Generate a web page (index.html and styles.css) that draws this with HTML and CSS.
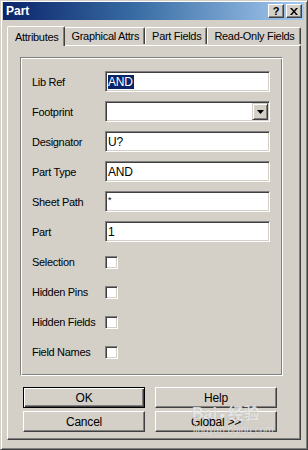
FILE: index.html
```html
<!DOCTYPE html>
<html>
<head>
<meta charset="utf-8">
<link rel="stylesheet" href="styles.css">
</head>
<body>
<div class="window">
  <div class="titlebar">
    <span class="title">Part</span>
    <div class="tbtns">
      <span class="tbtn help">?</span>
      <span class="tbtn close"><svg width="8" height="7" viewBox="0 0 8 7"><path d="M0 0h2l2 2.5L6 0h2L5 3.5 8 7H6L4 4.5 2 7H0l3-3.5z" fill="#000"/></svg></span>
    </div>
  </div>
  <div class="client">
    <div class="tabs">
      <div class="tab active">Attributes</div>
      <div class="tab">Graphical Attrs</div>
      <div class="tab">Part Fields</div>
      <div class="tab">Read-Only Fields</div>
    </div>
    <div class="panel">
      <div class="group">
        <div class="form">
          <label>Lib Ref</label><div class="input"><span class="sel">AND</span></div>
          <label>Footprint</label><div class="input combo"><span class="drop"><svg width="7" height="4" viewBox="0 0 7 4"><path d="M0 0h7L3.5 4z" fill="#000"/></svg></span></div>
          <label>Designator</label><div class="input">U?</div>
          <label>Part Type</label><div class="input">AND</div>
          <label>Sheet Path</label><div class="input small">*</div>
          <label>Part</label><div class="input">1</div>
          <label>Selection</label><div class="chkcell"><span class="chk"></span></div>
          <label>Hidden Pins</label><div class="chkcell"><span class="chk"></span></div>
          <label>Hidden Fields</label><div class="chkcell"><span class="chk"></span></div>
          <label>Field Names</label><div class="chkcell"><span class="chk"></span></div>
        </div>
      </div>
      <div class="buttons">
        <div class="btn default"><span>OK</span></div>
        <div class="btn"><span>Help</span></div>
        <div class="btn"><span>Cancel</span></div>
        <div class="btn"><span>Global &gt;&gt;</span></div>
      </div>
      <div class="watermark">
        <span class="wm-logo">Bai<span class="paw">&#x25CF;</span>&#x7ECF;&#x9A8C;</span>
        <span class="wm-url">jingyan.baidu.com</span>
      </div>
    </div>
  </div>
</div>
</body>
</html>
```
FILE: styles.css
```css
* { box-sizing: border-box; }
html, body { margin: 0; padding: 0; background: #d4d0c8; }
body {
  font-family: "Liberation Sans", Arial, sans-serif;
  font-size: 11px;
  letter-spacing: -0.3px;
  color: #000;
}
.window {
  width: 308px;
  height: 450px;
  background: #d4d0c8;
  border: 1px solid;
  border-color: #d4d0c8 #404040 #404040 #d4d0c8;
  box-shadow: inset 1px 1px 0 #fff, inset -1px -1px 0 #808080;
  padding: 1px 3px 2px 2px;
  display: flex;
  flex-direction: column;
}
.titlebar {
  height: 18px;
  background: linear-gradient(to right, #0a246a 0%, #3a6ea5 45%, #a6caf0 100%);
  display: flex;
  align-items: center;
  justify-content: space-between;
  padding: 0 2px 0 3px;
}
.title {
  color: #fff;
  font-weight: bold;
  font-size: 12px;
  letter-spacing: 0;
}
.tbtns { display: flex; gap: 2px; }
.tbtn {
  width: 16px;
  height: 14px;
  background: #d4d0c8;
  border: 1px solid;
  border-color: #fff #404040 #404040 #fff;
  box-shadow: inset -1px -1px 0 #808080;
  display: flex;
  align-items: center;
  justify-content: center;
  font-weight: bold;
  font-size: 11px;
  line-height: 1;
  letter-spacing: 0;
}
.close svg { display: block; margin-left: -1px; }
.client {
  flex: 1;
  padding: 6px 3px 0 4px;
  display: flex;
  flex-direction: column;
}
.tabs {
  display: flex;
  align-items: flex-end;
  height: 19px;
  position: relative;
  z-index: 1;
}
.tab {
  height: 17px;
  padding: 0 5px 0 6px;
  border: 1px solid;
  border-bottom: none;
  border-color: #fff #404040 transparent #fff;
  border-radius: 2px 2px 0 0;
  box-shadow: inset -1px 0 0 #808080;
  display: flex;
  align-items: center;
  background: #d4d0c8;
  margin-bottom: 1px;
  white-space: nowrap;
}
.tab.active {
  height: 20px;
  padding: 0 6px 0 7px;
  margin-bottom: -1px;
  margin-right: -1px;
  position: relative;
  z-index: 2;
}
.panel {
  width: 294px;
  height: 395px;
  border: 1px solid;
  border-color: #fff #404040 #404040 #fff;
  box-shadow: inset -1px -1px 0 #808080;
  padding: 11px 0 0 12px;
  position: relative;
}
.group {
  width: 263px;
  height: 319px;
  border: 1px solid;
  border-color: #808080 #fff #fff #808080;
  box-shadow: inset 1px 1px 0 #fff, inset -1px -1px 0 #808080;
  padding: 13px 0 0 11px;
}
.form {
  display: grid;
  grid-template-columns: 73px 165px;
  grid-auto-rows: 21px;
  row-gap: 9px;
}
.form label {
  display: flex;
  align-items: center;
  padding-top: 1px;
}
.input {
  height: 21px;
  background: #fff;
  border: 1px solid;
  border-color: #808080 #fff #fff #808080;
  box-shadow: inset 1px 1px 0 #404040, inset -1px -1px 0 #d4d0c8;
  padding: 0 0 0 2px;
  display: flex;
  align-items: center;
  font-size: 12px;
  letter-spacing: -0.2px;
}
.input.small { font-size: 9px; align-items: flex-start; padding-top: 3px; }
.sel {
  background: #0a246a;
  color: #fff;
  line-height: 14px;
  padding: 0 1px 0 0;
}
.combo { justify-content: flex-end; padding: 2px; }
.drop {
  width: 16px;
  height: 17px;
  margin-right: -1px;
  background: #d4d0c8;
  border: 1px solid;
  border-color: #d4d0c8 #404040 #404040 #d4d0c8;
  box-shadow: inset 1px 1px 0 #fff, inset -1px -1px 0 #808080;
  display: flex;
  align-items: center;
  justify-content: center;
}
.chkcell { display: flex; align-items: center; padding-top: 2px; }
.chk {
  width: 13px;
  height: 13px;
  background: #fff;
  border: 1px solid;
  border-color: #808080 #fff #fff #808080;
  box-shadow: inset 1px 1px 0 #404040, inset -1px -1px 0 #d4d0c8;
}
.buttons {
  margin: 11px 0 0 3px;
  display: grid;
  grid-template-columns: 122px 122px;
  grid-auto-rows: 21px;
  column-gap: 10px;
  row-gap: 3px;
}
.btn {
  background: #d4d0c8;
  border: 1px solid;
  border-color: #fff #404040 #404040 #fff;
  box-shadow: inset -1px -1px 0 #808080;
  display: flex;
  align-items: center;
  justify-content: center;
  font-size: 12px;
  letter-spacing: -0.2px;
  padding-top: 1px;
}
.btn.default {
  border: 1px solid #000;
  box-shadow: inset 1px 1px 0 #fff, inset -1px -1px 0 #404040, inset -2px -2px 0 #808080;
}
.watermark {
  position: absolute;
  left: 184px;
  top: 359px;
  width: 100px;
  color: rgba(255,255,255,0.7);
  text-shadow: 0 0 1px rgba(140,140,140,0.6);
  display: flex;
  flex-direction: column;
  align-items: flex-start;
  pointer-events: none;
  letter-spacing: 0;
}
.wm-logo {
  font-family: "Liberation Sans", "Noto Sans CJK SC", sans-serif;
  font-size: 16px;
  font-weight: bold;
  line-height: 17px;
}
.paw { font-size: 11px; margin: 0 2px; }
.wm-url {
  font-size: 10px;
  margin-left: 1px;
  line-height: 11px;
  color: rgba(255,255,255,0.65);
}
```
